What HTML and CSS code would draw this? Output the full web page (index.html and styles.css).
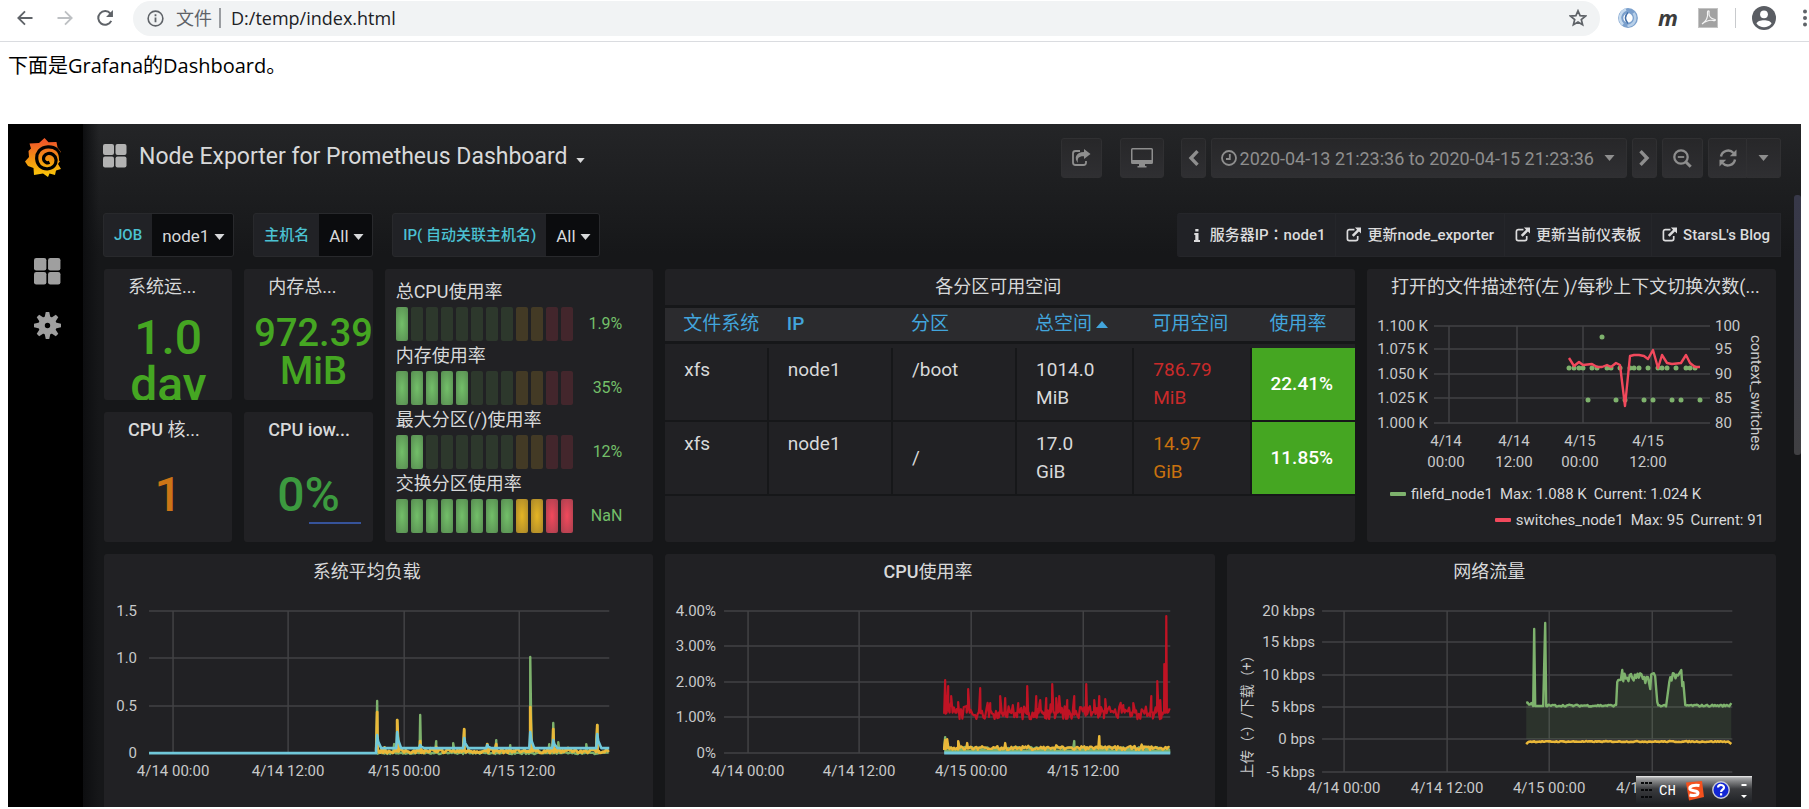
FILE: index.html
```html
<!DOCTYPE html>
<html lang="zh-CN">
<head>
<meta charset="utf-8">
<title>Node Exporter for Prometheus Dashboard</title>
<link rel="stylesheet" href="styles.css">
</head>
<body>
<svg class="defs" width="0" height="0" aria-hidden="true">
  <symbol id="i-apps" viewBox="0 0 24 24"><rect width="11" height="11" rx="2"/><rect x="12.500" width="11" height="11" rx="2"/><rect y="12.500" width="11" height="11" rx="2"/><rect x="12.500" y="12.500" width="11" height="11" rx="2"/></symbol>
  <symbol id="i-caret" viewBox="0 0 10 6"><path d="M0 0h10L5 6z"/></symbol>
  <symbol id="i-ext" viewBox="0 0 16 16"><path d="M9 2.800H3.500a2 2 0 0 0-2 2v7.700a2 2 0 0 0 2 2h7a2 2 0 0 0 2-2V9.500" fill="none" stroke="currentColor" stroke-width="1.800"/><path d="M9.500 .500H16V7l-2.200-2.200-5.600 5.600-2-2 5.600-5.600z"/></symbol>
</svg>

<header class="browser">
  <button class="nav" aria-label="后退"><svg viewBox="0 0 24 24"><path d="M21 12H4M12 4l-8 8 8 8" fill="none" stroke="#5f6368" stroke-width="2.200"/></svg></button>
  <button class="nav" aria-label="前进"><svg viewBox="0 0 24 24"><path d="M3 12h17M12 4l8 8-8 8" fill="none" stroke="#bdc0c3" stroke-width="2.200"/></svg></button>
  <button class="nav" aria-label="刷新"><svg viewBox="0 0 24 24"><path d="M19.500 15.500A8.200 8.200 0 1 1 18.500 6.800" fill="none" stroke="#5f6368" stroke-width="2.400"/><path d="M21.500 2.500v8.200h-8.200z" fill="#5f6368"/></svg></button>
  <div class="omnibox">
    <svg class="info" viewBox="0 0 18 18"><circle cx="9" cy="9" r="7.800" fill="none" stroke="#5f6368" stroke-width="1.700"/><path d="M9 8v5M9 4.600v1.900" stroke="#5f6368" stroke-width="1.900"/></svg>
    <label class="scheme" for="url">文件</label>
    <input id="url" class="url" value="D:/temp/index.html">
    <svg class="star" viewBox="0 0 18 18"><path d="M9 1.800l2.100 4.900 5.300.400-4.100 3.400 1.300 5.200L9 12.900l-4.600 2.800 1.300-5.200-4.100-3.400 5.300-.400z" fill="none" stroke="#5f6368" stroke-width="1.700"/></svg>
  </div>
  <div class="extensions">
    <svg viewBox="0 0 20 20"><circle cx="10" cy="10" r="7.300" fill="none" stroke="#7ba0cd" stroke-width="5.200"/><path d="M5 16.500C0 12 1.500 4 8 1.500" fill="none" stroke="#c6daee" stroke-width="2.500"/><path d="M9.500 18C17 17 19 10 15.500 5" fill="none" stroke="#b7cfe8" stroke-width="2.500"/><path d="M10 4.500C6.500 8 7 12 10 15.500" fill="none" stroke="#436fa8" stroke-width="1.500"/></svg>
    <span class="ext-m">m</span>
    <svg viewBox="0 0 20 20"><rect width="20" height="20" fill="#c4c4c4"/><rect x="1" y="1" width="18" height="18" fill="#a2a2a2"/><path d="M4 16c5-3 6-8 5.500-12 0-1.500 2-1.500 1.500 0-.500 4 2 7 6 7.500 1 1-.500 1.500-2 1-3-.800-7 .500-11 3.500z" fill="none" stroke="#f4f4f4" stroke-width="1.200"/></svg>
    <span class="divider"></span>
    <svg class="avatar" viewBox="0 0 24 24"><circle cx="12" cy="12" r="12" fill="#5a5d63"/><circle cx="12" cy="8.300" r="3.900" fill="#fff"/><path d="M4.500 17.500c1-4.500 14-4.500 15 0-3.500 5-11.500 5-15 0z" fill="#fff"/></svg>
    <svg class="dots" viewBox="0 0 6 18"><g fill="#5f6368"><circle cx="3" cy="2.500" r="2"/><circle cx="3" cy="9" r="2"/><circle cx="3" cy="15.500" r="2"/></g></svg>
  </div>
</header>

<p class="intro">下面是Grafana的Dashboard。</p>

<div class="dashboard">
  <nav class="sidebar">
    <svg class="logo" viewBox="0 0 37 39"><defs><linearGradient id="lg" x2="0" y2="1"><stop offset=".1" stop-color="#f05a28"/><stop offset=".6" stop-color="#f39a0f"/><stop offset="1" stop-color="#fbca0a"/></linearGradient></defs>
      <path fill="url(#lg)" d="M19.500 0l4 4.300L31.500 4l1 5.500 3.500 4.500V18l-1 5-2 3 3 5-5 1.500-1 4.500-5.500-1.500L23 39l-5-3.500-9 1.500-.500-7-5.500-2L0 23.500l4-4.500-.500-6L6 10.500 4.500 5.500l9.500-.500z"/>
      <path d="M35.500 23C36.500 12 29 8.500 23 8.800 15 9.300 11.300 15 11.700 21 12.300 27 16.500 31 22.500 30.800 28.500 30.500 31.500 26 31 21.500 30.300 17 26.500 15 23 15.500 19.500 16.200 17.700 19.500 19 22.500 20.200 24.800 22.500 25.300 24.500 24.300" fill="none" stroke="#000" stroke-width="3.200"/></svg>
    <a href="#" aria-label="Dashboards"><svg class="side-icon"><use href="#i-apps"/></svg></a>
    <a href="#" aria-label="Configuration"><svg class="side-icon" viewBox="0 0 28 28"><g transform="translate(14 14)"><path fill-rule="evenodd" d="M0-9.500A9.500 9.500 0 1 1 0 9.500 9.500 9.500 0 0 1 0-9.500M0-2.800a2.800 2.800 0 1 0 0 5.600 2.800 2.800 0 0 0 0-5.600"/><g id="t"><path d="M-3-8.500L-1.800-14h3.600L3-8.500zM-3 8.500L-1.800 14h3.600L3 8.500zM8.500-3L14-1.800v3.600L8.500 3zM-8.500-3L-14-1.800v3.600L-8.500 3z"/></g><use href="#t" transform="rotate(45)"/></g></svg></a>
  </nav>

  <main class="main">
    <div class="toolbar">
      <svg class="apps"><use href="#i-apps"/></svg>
      <h1>Node Exporter for Prometheus Dashboard</h1>
      <svg class="caret small"><use href="#i-caret"/></svg>
      <div class="actions">
        <button class="btn share" aria-label="Share"><svg width="20" height="18" viewBox="0 0 20 18"><path d="M9 2H4.500A2.500 2.500 0 0 0 2 4.500v9A2.500 2.500 0 0 0 4.500 16h8a2.500 2.500 0 0 0 2.500-2.500V12" fill="none" stroke="currentColor" stroke-width="1.800"/><path d="M13 0l6.500 5L13 10V7.300C8 7 6 9 7 14 2.500 9 5 3 13 3z"/></svg></button>
        <button class="btn monitor" aria-label="View mode"><svg width="22" height="20" viewBox="0 0 22 20"><path fill-rule="evenodd" d="M1.500 0h19A1.500 1.500 0 0 1 22 1.500v13a1.500 1.500 0 0 1-1.500 1.500H14v2h1.500v1.500h-9V18H8v-2H1.500A1.500 1.500 0 0 1 0 14.500v-13A1.500 1.500 0 0 1 1.500 0zM1.500 1.500v10.500h19V1.500z"/></svg></button>
        <div class="timenav">
          <button class="btn arrow" aria-label="Back"><svg width="11" height="16" viewBox="0 0 11 16"><path d="M9.500 1.200L3 8l6.500 6.800" fill="none" stroke="currentColor" stroke-width="3.400"/></svg></button>
          <button class="btn time"><svg width="16" height="16" viewBox="0 0 16 16"><g fill="none" stroke="currentColor" stroke-width="1.800"><circle cx="8" cy="8" r="7"/><path d="M8.800 4v5H5"/></g></svg><span>2020-04-13 21:23:36 to 2020-04-15 21:23:36</span><svg class="caret"><use href="#i-caret"/></svg></button>
          <button class="btn arrow" aria-label="Forward"><svg width="11" height="16" viewBox="0 0 11 16"><path d="M1.500 1.200L8 8l-6.500 6.800" fill="none" stroke="currentColor" stroke-width="3.400"/></svg></button>
          <button class="btn zoom" aria-label="Zoom out"><svg width="19" height="19" viewBox="0 0 19 19"><g fill="none" stroke="currentColor"><circle cx="8" cy="8" r="6.700" stroke-width="2.300"/><path d="M4.800 8h6.400" stroke-width="1.800"/><path d="M12.700 12.700l5 5" stroke-width="3"/></g></svg></button>
          <div class="refresh"><button class="btn" aria-label="Refresh"><svg width="18" height="18" viewBox="0 0 18 18"><path d="M2 7.500A7.200 7.200 0 0 1 14.500 4M16 10.500A7.200 7.200 0 0 1 3.500 14" fill="none" stroke="currentColor" stroke-width="2.400"/><path d="M17.500.500v6.700h-6.700zM.500 17.500v-6.700h6.700z"/></svg></button><button class="btn" aria-label="Refresh interval"><svg class="caret"><use href="#i-caret"/></svg></button></div>
        </div>
      </div>
    </div>

    <div class="submenu">
      <div class="variable"><label for="job">JOB</label><span class="pick"><select id="job"><option>node1</option></select><svg class="caret"><use href="#i-caret"/></svg></span></div>
      <div class="variable"><label for="host">主机名</label><span class="pick"><select id="host"><option>All</option></select><svg class="caret"><use href="#i-caret"/></svg></span></div>
      <div class="variable"><label for="ip">IP( 自动关联主机名)</label><span class="pick"><select id="ip"><option>All</option></select><svg class="caret"><use href="#i-caret"/></svg></span></div>
      <div class="links">
        <a href="#"><svg class="i-info" viewBox="0 0 6 13"><path d="M1.300 0h3.200v2.600H1.300zM.300 4h4.200v7H6v2H0v-2h1.300V6h-1z"/></svg><span>服务器IP<span class="centered" lang="zh-TW">：</span>node1</span></a>
        <a href="#"><svg class="ext"><use href="#i-ext"/></svg><span>更新node_exporter</span></a>
        <a href="#"><svg class="ext"><use href="#i-ext"/></svg><span>更新当前仪表板</span></a>
        <a href="#"><svg class="ext"><use href="#i-ext"/></svg><span>StarsL's Blog</span></a>
      </div>
    </div>

    <div class="grid">
      <div class="stats">
        <section class="panel stat"><h2 class="left">系统运...</h2><div class="value">1.0<br>day</div></section>
        <section class="panel stat"><h2 class="left">内存总...</h2><div class="value medium">972.39<br>MiB</div></section>
        <section class="panel stat"><h2 class="left"><span class="en">CPU</span> 核...</h2><div class="value single orange">1</div></section>
        <section class="panel stat"><h2 class="left"><span class="en">CPU iow...</span></h2><div class="value single teal">0%</div><div class="spark"></div></section>
      </div>

      <section class="panel gauges" id="gauges"></section>

      <section class="panel tablepanel">
        <h2>各分区可用空间</h2>
        <table>
          <colgroup><col class="c1"><col class="c2"><col class="c3"><col class="c4"><col class="c5"><col class="c6"></colgroup>
          <thead><tr><th>文件系统</th><th class="en">IP</th><th>分区</th><th>总空间<svg class="sort" viewBox="0 0 12 7"><path d="M0 7h12L6 0z"/></svg></th><th>可用空间</th><th>使用率</th></tr></thead>
          <tbody>
            <tr class="spacer"><td colspan="6"></td></tr>
            <tr><td>xfs</td><td>node1</td><td>/boot</td><td>1014.0<br>MiB</td><td class="red">786.79<br>MiB</td><td class="pct">22.41%</td></tr>
            <tr><td>xfs</td><td>node1</td><td class="mid">/</td><td>17.0<br>GiB</td><td class="amber">14.97<br>GiB</td><td class="pct">11.85%</td></tr>
          </tbody>
        </table>
      </section>

      <section class="panel fd">
        <h2 class="left">打开的文件描述符(左 )/每秒上下文切换次数(...</h2>
        <svg class="chart" id="fd" viewBox="0 0 409 170"></svg>
        <div class="legend first"><i class="green"></i><span>filefd_node1</span><span>Max: 1.088 K</span><span>Current: 1.024 K</span></div>
        <div class="legend end"><i class="pink"></i><span>switches_node1</span><span>Max: 95</span><span>Current: 91</span></div>
      </section>

      <section class="panel wide"><h2>系统平均负载</h2><svg class="chart" id="load" viewBox="0 0 549 230"></svg></section>
      <section class="panel wide"><h2><span class="en">CPU</span>使用率</h2><svg class="chart" id="cpu" viewBox="0 0 549 230"></svg></section>
      <section class="panel wide"><h2>网络流量</h2><svg class="chart" id="net" viewBox="0 0 549 230"></svg></section>
    </div>
  </main>
  <div class="scrollbar"></div>
</div>

<div class="ime">
  <svg class="grip" viewBox="0 0 11 17"><g fill="#08090b"><rect width="3" height="2"/><rect x="4" width="3" height="2"/><rect x="8" width="3" height="2"/><rect y="7" width="3" height="2"/><rect x="4" y="7" width="3" height="2"/><rect x="8" y="7" width="3" height="2"/><rect y="14" width="3" height="2"/><rect x="4" y="14" width="3" height="2"/><rect x="8" y="14" width="3" height="2"/></g></svg>
  <span class="lang">CH</span>
  <svg class="sogou" viewBox="0 0 20 20"><path d="M2 1.500L18 0l2 16-15 3.500z" fill="#f4511e"/><path d="M15.500 4.500C10 3.500 5 5 6 8.200c1 2.300 8 .800 8 3.800 0 2.500-4 3-8.500 2" fill="none" stroke="#fff" stroke-width="3"/></svg>
  <svg class="help" viewBox="0 0 18 18"><circle cx="9" cy="9" r="8.200" fill="#1226d4" stroke="#c9cbd6" stroke-width="1.400"/><path d="M6 6.500c.300-3.600 6.200-3.200 6 .200-.200 2-2.900 2-2.900 4.300M9.100 12.300v2.200" fill="none" stroke="#fff" stroke-width="2.200"/></svg>
  <svg class="opts" viewBox="0 0 6 16"><path d="M.500 1h5v2h-5zM0 12h6l-3 3z" fill="#fff"/></svg>
</div>
<script src="charts.js"></script>
</body>
</html>
```

FILE: styles.css
```css
* { box-sizing: border-box; }
body {
  margin: 0;
  background: #fff;
  color: #000;
  font-family: Roboto, "Noto Sans CJK SC", sans-serif;
  height: 100vh;
  overflow: hidden;
  display: flex;
  flex-direction: column;
}
button, select, input { font: inherit; color: inherit; border: 0; background: none; padding: 0; margin: 0; outline: 0; }
svg { display: block; flex: none; }
h1, h2, p { margin: 0; }
.defs { position: absolute; }

/* browser bar */
.browser { display: flex; align-items: center; height: 42px; padding: 0 0 5px 15px; border-bottom: 1px solid #dadce0; flex: none; }
.nav { width: 20px; height: 20px; margin-right: 20px; }
.nav svg { width: 20px; height: 20px; }
.omnibox { flex: 1; display: flex; align-items: center; height: 35px; margin-left: -2px; padding: 0 13px 0 14px; border-radius: 18px; background: #f1f3f4; font-family: "Open Sans", "Noto Sans CJK SC", sans-serif; font-size: 18px; color: #202124; }
.info { width: 17px; height: 17px; margin-right: 12px; }
.scheme { color: #5f6368; line-height: 20px; padding-right: 7px; border-right: 2px solid #9a9da1; margin-right: 10px; }
.url { flex: 1; min-width: 0; }
.star { width: 18px; height: 18px; }
.extensions { display: flex; align-items: center; padding-left: 18px; }
.extensions svg { width: 20px; height: 20px; }
.ext-m { font: italic 700 22px/20px "Open Sans", sans-serif; color: #3c3c3c; margin: 0 20px 3px 20px; }
.divider { width: 1px; height: 20px; background: #c8cacd; margin: 0 16px 0 17px; }
.extensions .avatar { width: 24px; height: 24px; }
.extensions .dots { width: 6px; height: 18px; margin: 0 1px 0 26px; }

.intro { font-family: "Open Sans", "Noto Sans CJK SC", sans-serif; font-size: 20px; line-height: 30px; padding: 9px 8px 0; height: 82px; flex: none; }

/* dashboard shell */
.dashboard { flex: 1; min-height: 0; display: flex; position: relative; margin: 0 8px 2px; overflow: hidden; background: #161719; color: #d8d9da; }
.sidebar { width: 75px; flex: none; background: #000; display: flex; flex-direction: column; padding: 14px 0 0 17px; }
.logo { width: 37px; height: 39px; margin-bottom: 81px; }
.sidebar a { margin: 0 0 27px 9px; color: #9b9b9b; }
.side-icon { width: 27px; height: 27px; fill: #9f9f9f; }
.main { flex: 1; min-width: 0; padding: 14px 20px 0; background: linear-gradient(90deg, #0d0e10 0, transparent 16px), linear-gradient(#242527 0, #161719 130px); }
.scrollbar { position: absolute; right: 0; top: 71px; width: 7px; height: 260px; border-radius: 3px; background: linear-gradient(#373849, #404043); }

.toolbar { display: flex; align-items: center; height: 40px; }
.apps { width: 24px; height: 24px; fill: #b2b2b2; margin: 0 12px 4px 0; }
h1 { font-size: 23px; font-weight: 400; line-height: 30px; padding-bottom: 2px; white-space: nowrap; }
.caret { width: 11px; height: 6px; fill: currentColor; }
.caret.small { width: 9px; height: 5px; margin: 4px 0 0 8px; }
.actions { margin-left: auto; display: flex; }
.btn { height: 40px; display: flex; align-items: center; justify-content: center; background: linear-gradient(#272729, #2f2f32); border: 1px solid #303032; border-radius: 3px; color: #8e8e8e; }
.btn svg { fill: currentColor; }
.share { width: 41px; margin-right: 18px; }
.monitor { width: 44px; margin-right: 17px; }
.timenav { display: flex; gap: 5px; }
.arrow { width: 25px; }
.time { gap: 3px; padding: 0 11px 0 9px; font-size: 18px; white-space: nowrap; }
.time .caret { margin-left: 7px; }
.zoom { width: 41px; }
.refresh { display: flex; }
.refresh .btn { width: 39px; border-radius: 3px 0 0 3px; }
.refresh .btn + .btn { width: 34px; border-left: 0; border-radius: 0 3px 3px 0; }

.submenu { display: flex; gap: 19px; margin-top: 35px; font-size: 15px; }
.variable { display: flex; height: 44px; border: 1px solid #28292c; border-radius: 3px; background: #212226; overflow: hidden; }
.variable label { color: #4bc1d2; font-weight: 500; line-height: 42px; padding: 0 10px; white-space: nowrap; }
.pick { position: relative; display: flex; align-items: center; background: #0b0c0e; }
.pick select { appearance: none; font-size: 17px; height: 42px; padding: 2px 23px 0 10px; }
.pick .caret { position: absolute; right: 8px; top: 20px; pointer-events: none; }
.links { margin-left: auto; display: flex; }
.links a { display: flex; align-items: center; gap: 6px; height: 44px; line-height: 22px; padding: 0 10px; background: #212226; border: 1px solid #25262a; border-left-width: 0; color: #dcdcdd; font-weight: 500; text-decoration: none; white-space: nowrap; }
.links a:first-child { padding-left: 17px; border-radius: 3px 0 0 3px; gap: 10px; }
.links svg { fill: currentColor; }
.ext { width: 15px; height: 15px; margin-bottom: 2px; }
.i-info { width: 6px; height: 13px; }
.centered { font-family: "Noto Sans CJK TC", sans-serif; line-height: 1; }

/* panels */
.grid { display: grid; grid-template-columns: repeat(24, minmax(0, 1fr)); gap: 12px; padding: 12px 5px 0 1px; }
.panel { background: #212124; border-radius: 3px; overflow: hidden; min-width: 0; }
h2 { font-size: 18px; font-weight: 400; line-height: 36px; height: 36px; text-align: center; padding-right: 24px; white-space: nowrap; overflow: hidden; }
h2.left { text-align: left; padding: 0 0 0 24px; }
.en { font-weight: 500; }
.stats { grid-column: span 4; display: grid; grid-template: 131px 130px / 1fr 1fr; gap: 12px; }
.value { color: #45a622; font-size: 48px; line-height: 47px; font-weight: 500; text-align: center; padding-top: 9px; }
.value.medium { font-size: 38px; line-height: 38px; padding: 9px 0 0 10px; }
.value.single { padding-top: 23px; }
.orange { color: #cc7516; }
.teal { color: #3c9a3f; }
.stat { position: relative; }
.spark { position: absolute; right: 12px; bottom: 18px; width: 52px; height: 2px; background: #36539a; }
.gauges { grid-column: span 4; padding: 8px 10px 8px 11px; }
.g-title { font-size: 18px; line-height: 30px; height: 30px; }
.g-row { display: flex; gap: 3px; height: 34px; align-items: stretch; }
.g-row i { width: 12px; border-radius: 2px; }
.g-row b { flex: 1; font-size: 16px; font-weight: 400; line-height: 34px; color: #73bf69; text-align: right; padding-right: 21px; }
.on-green { background: radial-gradient(#73bf69, #578c51); }
.on-yellow { background: radial-gradient(#e5b524, #a8862a); }
.on-red { background: radial-gradient(#f2495c, #a8404e); }
.off-green { background: #2d382c; }
.off-yellow { background: #433a25; }
.off-red { background: #43262c; }

.tablepanel { grid-column: span 10; }
table { width: 100%; table-layout: fixed; border-collapse: separate; border-spacing: 0; font-size: 19px; }
.c1 { width: 15%; } .c2 { width: 18%; } .c3 { width: 18%; } .c4 { width: 17%; } .c5 { width: 17%; } .c6 { width: 15%; }
th { height: 39px; padding: 0 0 2px 18px; border: solid #161719; border-width: 3px 0; background: #2b2b2e; color: #42a5dc; font-weight: 400; text-align: left; line-height: 28px; white-space: nowrap; }
th.en { font-weight: 500; }
.spacer td { height: 4px; padding: 0; border: 0; }
td { height: 74px; padding: 8px 0 8px 19px; vertical-align: top; line-height: 28px; border: solid #161719; border-width: 0 2px 2px 0; }
td.mid { vertical-align: middle; }
td.pct { vertical-align: middle; background: #45a622; color: #fff; font-weight: 500; border-right: 0; }
.red { color: #c92a2a; }
.amber { color: #c9720f; }
.sort { display: inline-block; width: 12px; height: 7px; fill: #42a5dc; margin: 0 0 2px 4px; }

.fd { grid-column: span 6; }
.wide { grid-column: span 8; height: 300px; }
.chart { width: 100%; height: auto; font-size: 15px; fill: #c8c9ca; }
.chart .vert { font-size: 14px; font-family: Roboto, "Noto Sans CJK TC", sans-serif; }
.legend { display: flex; align-items: center; gap: 7px; height: 26px; padding: 0 12px 0 23px; font-size: 15px; white-space: nowrap; }
.legend.first { margin-top: 6px; }
.legend.end { justify-content: flex-end; }
.legend i { width: 16px; height: 4px; border-radius: 1px; margin-right: -2px; }
.green { background: #7eb26d; }
.pink { background: #f2495c; }

/* input method bar floats over the page */
.ime { position: fixed; right: 57px; bottom: 4px; width: 116px; height: 29px; display: flex; align-items: center; padding: 0 5px; background: linear-gradient(#f4f4f4 0, #a5a6a8 2px, #7c7d7f 6px, #3a3b3e 13px, #1d1f23 100%); }
.grip { width: 11px; height: 17px; }
.lang { font: 14px/20px "Liberation Mono", monospace; color: #fff; margin: 0 8px 0 7px; }
.sogou { width: 20px; height: 20px; }
.help { width: 18px; height: 18px; margin: 0 11px 2px 8px; }
.opts { width: 6px; height: 16px; }
```

FILE: charts.js
```js
// Seeded noise so that the curves are the same on every load.
let seed = 7;
const rnd = () => (seed = (seed * 16807) % 2147483647) / 2147483647;

const line = (pts, color, width = 2.4, extra = "") =>
  `<polyline points="${pts.map(p => p.map(v => Math.round(v * 10) / 10).join()).join(" ")}" fill="none" stroke="${color}" stroke-width="${width}" stroke-linejoin="round" ${extra}/>`;
const text = (x, y, s, anchor = "middle") => `<text x="${x}" y="${y}" text-anchor="${anchor}">${s}</text>`;

function axes({ left, right, ys, xs, labels, times, labelX, timeY }) {
  const top = ys[0], bottom = ys[ys.length - 1];
  let d = ys.map(y => `M${left} ${y}H${right}`).join("") + xs.map(x => `M${x} ${top}V${bottom}`).join("");
  return `<path d="${d}" stroke="#fff" stroke-opacity=".15" stroke-width="1.5"/>` +
    labels.map((s, i) => text(labelX, ys[i] + 5, s, "end")).join("") +
    times.map((s, i) => text(xs[i], timeY, s)).join("");
}

// Base line with noise, and narrow peaks laid over it.
function series(from, to, base, noise, peaks, step = 1.4, half = 1.5) {
  const pts = [];
  for (let x = from; x <= to; x += step) {
    let y = base - rnd() * noise;
    if (rnd() > 0.85) y -= noise * 0.5 * rnd();
    pts.push([x, y]);
  }
  for (const [x, y] of peaks) pts.push([Math.max(from, x - half), base - noise / 2], [x, y], [Math.min(to, x + half), base - noise / 2]);
  return pts.sort((a, b) => a[0] - b[0]);
}
const fill = (id, html) => { document.getElementById(id).innerHTML = html; };
const times = ["4/14 00:00", "4/14 12:00", "4/15 00:00", "4/15 12:00"];

// Gauges
const cells = 12;
fill("gauges", [["总CPU使用率", 1, "1.9%"], ["内存使用率", 5, "35%"], ["最大分区(/)使用率", 2, "12%"], ["交换分区使用率", 12, "NaN"]]
  .map(([name, lit, value]) => {
    let row = "";
    for (let i = 0; i < cells; i++) row += `<i class="${i < lit ? "on" : "off"}-${i < 8 ? "green" : i < 10 ? "yellow" : "red"}"></i>`;
    return `<div class="g-title">${name}</div><div class="g-row">${row}<b>${value}</b></div>`;
  }).join(""));

// File descriptors and context switches
{
  const ys = [21, 44, 69, 93, 118], xs = [82, 150, 216, 284];
  let s = axes({ left: 67, right: 343, ys, xs, labels: ["1.100 K", "1.075 K", "1.050 K", "1.025 K", "1.000 K"], times: [], labelX: 61, timeY: 0 });
  [100, 95, 90, 85, 80].forEach((v, i) => { s += text(348, ys[i] + 5, v, "start"); });
  [["4/14", "00:00"], ["4/14", "12:00"], ["4/15", "00:00"], ["4/15", "12:00"]].forEach((t, i) => {
    s += text(xs[i] - 3, 141, t[0]) + text(xs[i] - 3, 162, t[1]);
  });
  const dot = (x, y) => { s += `<circle cx="${x}" cy="${y}" r="2.5" fill="#7eb26d"/>`; };
  [202, 207, 212, 216, 225, 230, 240, 244, 253, 263, 267, 272, 281, 291, 295, 300, 309, 319, 323, 328].forEach(x => dot(x, 63));
  [221, 249, 258, 277, 286, 305, 314, 333].forEach(x => dot(x, 95));
  dot(235, 32);
  s += line([[202, 53], [207, 61], [212, 57], [216, 60], [225, 59], [230, 62], [235, 62], [240, 60], [244, 62], [249, 58], [253, 60], [258, 101], [263, 51], [267, 50], [272, 50], [277, 51], [281, 54], [286, 45], [291, 63], [295, 50], [300, 58], [305, 59], [314, 58], [319, 50], [323, 58], [328, 62], [333, 62]], "#f2495c");
  s += `<text transform="translate(384 88) rotate(90)" text-anchor="middle">context_switches</text>`;
  fill("fd", s);
}

// Load average
{
  let s = axes({ left: 45, right: 505, ys: [21, 68, 116, 163], xs: [69, 184, 300, 415], labels: ["1.5", "1.0", "0.5", "0"], times, labelX: 33, timeY: 186 });
  s += line(series(272, 505, 164, 2, [[273, 111], [293, 130], [290, 154], [316, 125], [332, 151], [349, 153], [360, 140], [383, 154], [392, 150], [406, 155], [426, 67], [449, 133], [445, 154], [454, 152], [482, 154], [493, 135]]), "#7eb26d");
  s += line(series(272, 505, 163, 4, [[273, 122], [293, 130], [316, 151], [332, 157], [360, 139], [383, 154], [392, 154], [426, 117], [449, 139], [493, 135]]), "#eab839", 2.8);
  const blue = [[45, 163], [272, 163]];
  for (const [x, y] of [[273, 145], [293, 142], [316, 155], [360, 148], [383, 155], [426, 142], [449, 150], [493, 144]])
    blue.push([x - 1, 158], [x, y], [x + 1, (y + 158) / 2], [x + 4, 158]);
  blue.push([505, 158]);
  s += line(blue, "#70c8da", 2.6);
  fill("load", s);
}

// CPU usage
{
  let s = axes({ left: 59, right: 505, ys: [21, 56, 92, 127, 163], xs: [83, 194, 306, 418], labels: ["4.00%", "3.00%", "2.00%", "1.00%", "0%"], times, labelX: 51, timeY: 186 });
  s += line(series(279, 505, 129, 13, [[280, 90], [283, 96], [286, 106], [293, 112], [303, 99], [315, 98], [325, 113], [335, 106], [340, 108], [353, 113], [362, 96], [371, 106], [375, 110], [381, 108], [387, 94], [391, 108], [394, 106], [402, 110], [409, 106], [421, 94], [429, 110], [434, 106], [440, 109], [458, 115], [468, 113], [486, 106], [492, 91], [495, 110], [499, 74], [501, 26]]), "#bf1324", 2.2);
  s += line([[279, 161], [505, 161]], "#7eb26d", 3);
  s += line(series(279, 505, 160, 3, [[280, 147], [409, 151]]), "#7eb26d");
  s += line(series(279, 505, 160, 4, [[280, 150], [282, 149], [293, 151], [302, 153], [340, 153], [434, 146]]), "#eab839", 2.4);
  s += line([[279, 163], [505, 163]], "#70c8da", 3);
  fill("cpu", s);
}

// Network traffic
{
  let s = axes({ left: 95, right: 505, ys: [21, 52, 85, 117, 149, 182], xs: [117, 220, 322, 425], labels: ["20 kbps", "15 kbps", "10 kbps", "5 kbps", "0 bps", "-5 kbps"], times, labelX: 88, timeY: 203 });
  const flat = (a, b, y, n) => { const p = []; for (let x = a; x <= b; x += 1.3) p.push([x, y - rnd() * n]); return p; };
  const g = [...flat(299, 305, 116, 4), [306, 116], [307, 39], [308, 116], [316, 116], [318, 33], [319, 116],
    ...flat(320, 389, 116.5, 2), [390, 92], ...flat(391, 394, 92, 5), [395, 80], ...flat(396, 421, 93, 10), [423, 99], ...flat(424, 428, 88, 6),
    [430, 112], ...flat(431, 440, 116.5, 2), [442, 92], ...flat(443, 452, 93, 10), [454, 80], [455, 96], [456, 92], [458, 115],
    ...flat(459, 502, 116.5, 2), [504, 113]];
  s += `<path d="M299 149L${g.map(p => p.join(" ")).join("L")}V149z" fill="#7eb26d" fill-opacity=".12"/>` + line(g, "#7eb26d");
  s += line([[299, 154], [301, 152], ...flat(302, 502, 152, 1), [504, 154]], "#eab839", 2.6);
  s += `<text class="vert" lang="zh-TW" transform="translate(25 123) rotate(-90)" text-anchor="middle">上传（-）/下载（+）</text>`;
  fill("net", s);
}
```
